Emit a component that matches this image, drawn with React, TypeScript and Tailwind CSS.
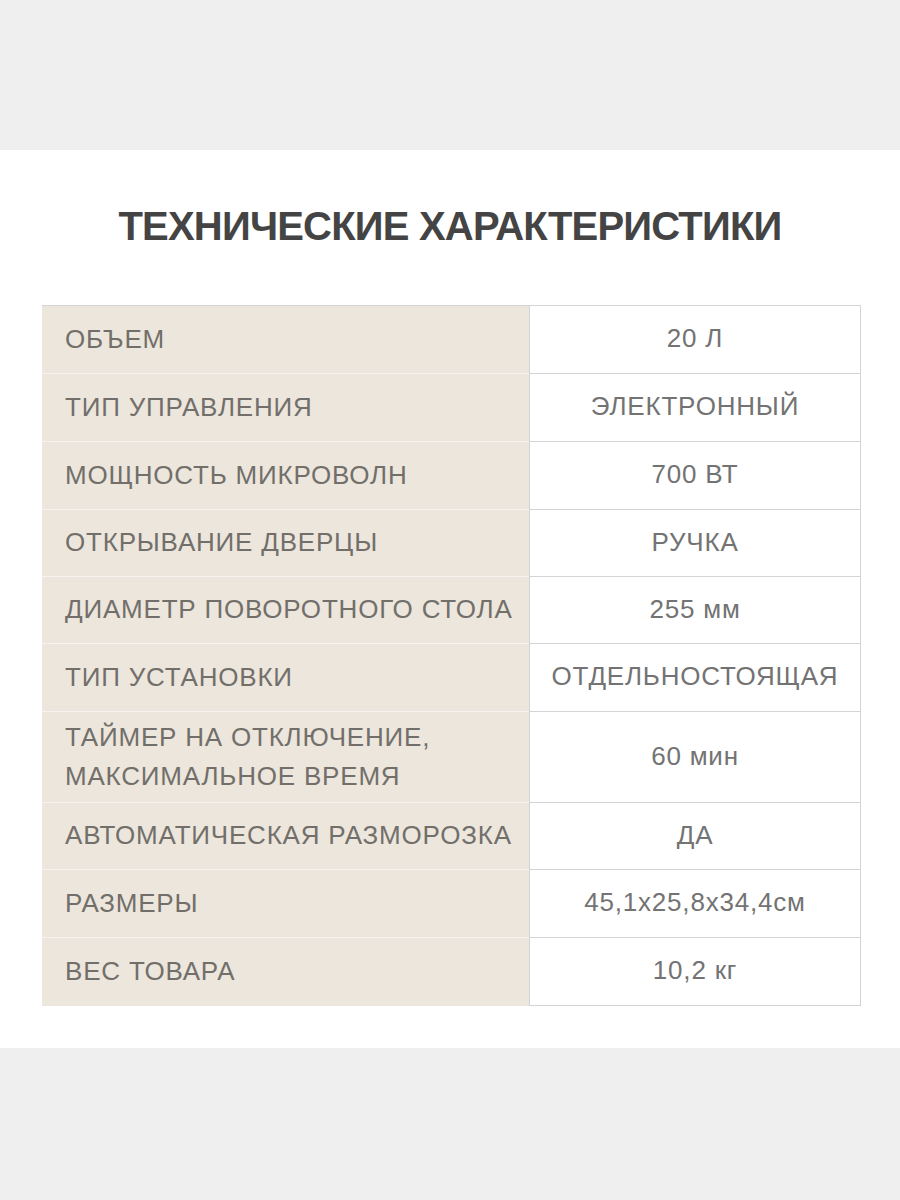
import React from 'react';

const rows: { label: string[]; value: string; h: string }[] = [
  { label: ['ОБЪЕМ'], value: '20 Л', h: 'h-[68px]' },
  { label: ['ТИП УПРАВЛЕНИЯ'], value: 'ЭЛЕКТРОННЫЙ', h: 'h-[68px]' },
  { label: ['МОЩНОСТЬ МИКРОВОЛН'], value: '700 ВТ', h: 'h-[68px]' },
  { label: ['ОТКРЫВАНИЕ ДВЕРЦЫ'], value: 'РУЧКА', h: 'h-[67px]' },
  { label: ['ДИАМЕТР ПОВОРОТНОГО СТОЛА'], value: '255 мм', h: 'h-[67px]' },
  { label: ['ТИП УСТАНОВКИ'], value: 'ОТДЕЛЬНОСТОЯЩАЯ', h: 'h-[68px]' },
  { label: ['ТАЙМЕР НА ОТКЛЮЧЕНИЕ,', 'МАКСИМАЛЬНОЕ ВРЕМЯ'], value: '60 мин', h: 'h-[91px]' },
  { label: ['АВТОМАТИЧЕСКАЯ РАЗМОРОЗКА'], value: 'ДА', h: 'h-[67px]' },
  { label: ['РАЗМЕРЫ'], value: '45,1x25,8x34,4см', h: 'h-[68px]' },
  { label: ['ВЕС ТОВАРА'], value: '10,2 кг', h: 'h-[68px]' },
];

export default function App() {
  return (
    <div className="min-h-[1200px] bg-[#efefef] pt-[150px] font-['Liberation_Sans',Arial,sans-serif]">
      <div className="bg-white h-[898px] pt-[48px]">
        {/* Title */}
        <h1 className="text-center text-[40px] font-bold text-[#444444] tracking-[-0.8px] leading-[56px]">
          ТЕХНИЧЕСКИЕ ХАРАКТЕРИСТИКИ
        </h1>

        {/* Specs table */}
        <div className="mt-[51px] ml-[42px] w-[819px] border-t border-[#d4d4d4]">
          {rows.map((r, i) => (
            <div key={i} className={`flex ${r.h}`}>
              <div
                className={`w-[487px] bg-[#ece6dc] flex flex-col justify-center pl-[23px] pb-[1px] text-[26px] tracking-[0.8px] leading-[39px] text-[#726f6b] ${
                  i < rows.length - 1 ? 'border-b border-[#f6f3ee]' : ''
                }`}
              >
                {r.label.map((l) => (
                  <span key={l}>{l}</span>
                ))}
              </div>
              <div className="flex-1 flex items-center justify-center pb-[2px] bg-white border-x border-b border-[#d4d4d4] text-[26px] tracking-[0.8px] text-[#737373]">
                {r.value}
              </div>
            </div>
          ))}
        </div>
      </div>
    </div>
  );
}
